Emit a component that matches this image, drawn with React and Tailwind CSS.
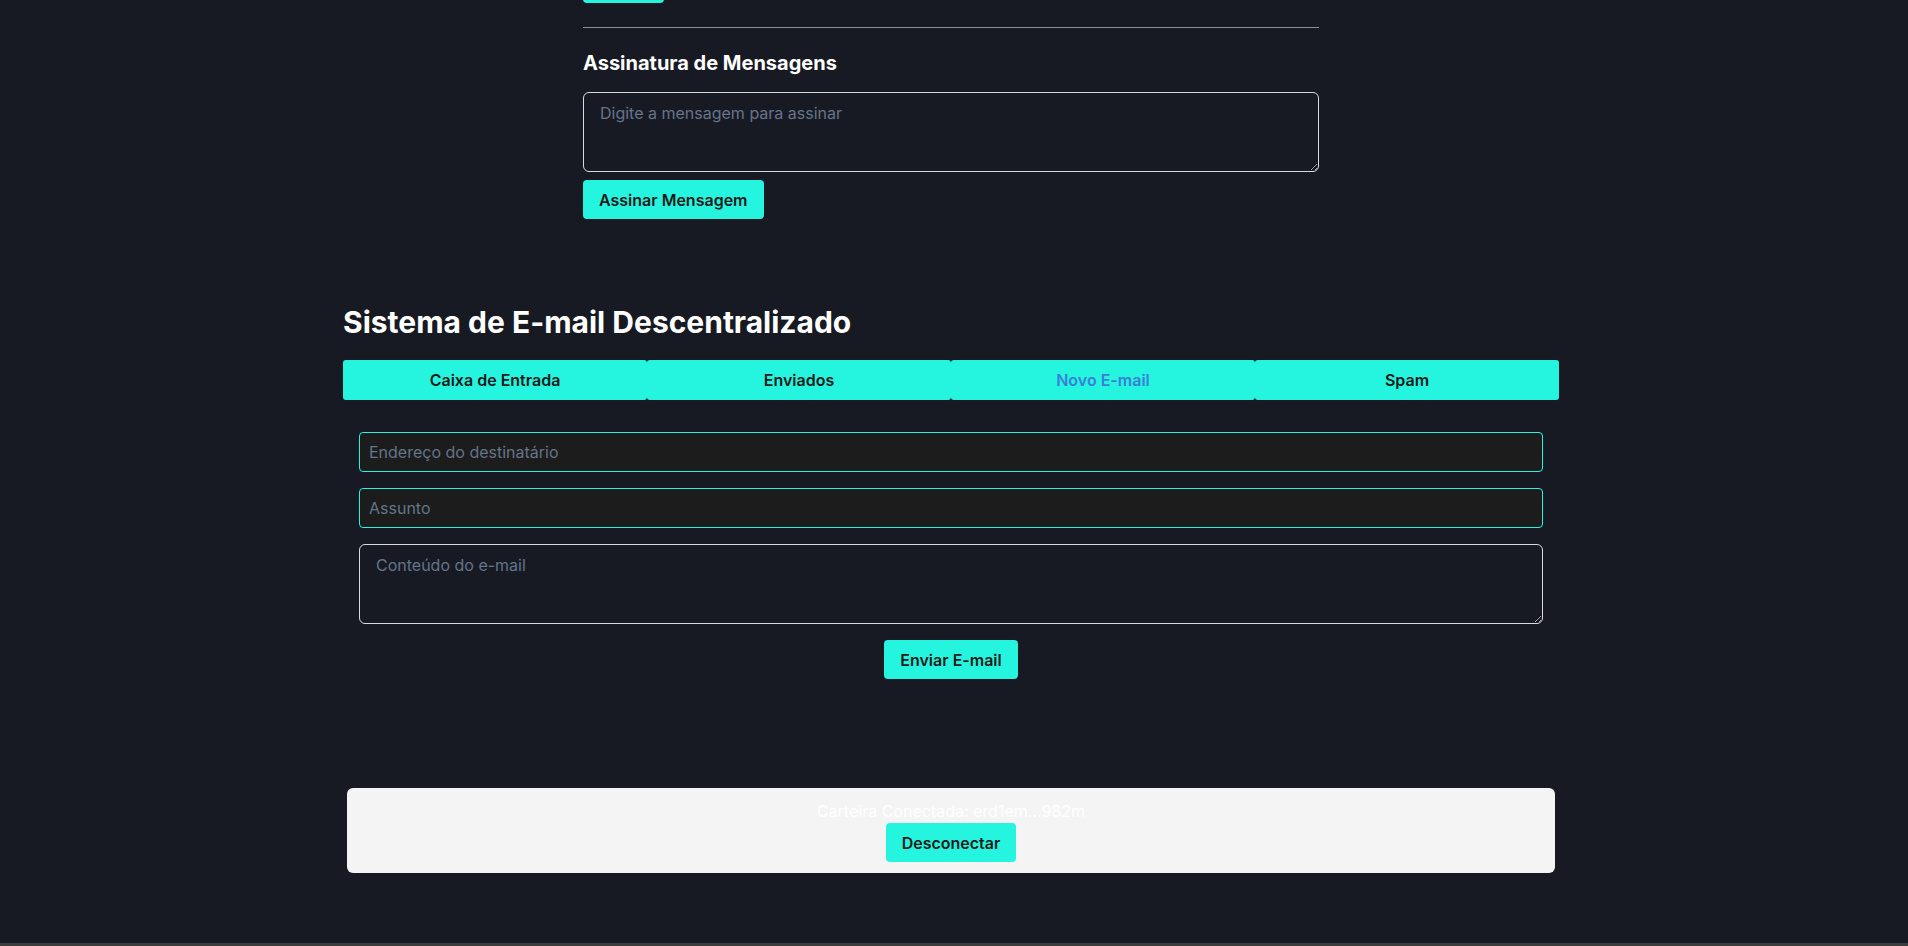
// App.jsx
import React, { useState } from 'react';

const tabs = ['Caixa de Entrada', 'Enviados', 'Novo E-mail', 'Spam'];

const App = () => {
  const [activeTab, setActiveTab] = useState('Novo E-mail');
  const [signMessage, setSignMessage] = useState('');
  const [recipient, setRecipient] = useState('');
  const [subject, setSubject] = useState('');
  const [content, setContent] = useState('');

  return (
    <div
      className="min-h-screen bg-[#181a23] pr-[6px] border-b-[3px] border-[#3c3c3c] overflow-hidden"
      style={{ fontFamily: 'Inter, "Noto Sans", sans-serif' }}
    >
      {/* Seccion de firma */}
      <div className="w-[736px] mx-auto -mt-[36px]">
        <button className="block h-[39px] w-[81px] rounded bg-[#25f5de]"></button>

        <hr className="mt-6 border-t border-[#8a8d94]" />

        <h2 className="mt-[21px] text-xl font-bold text-white leading-7">Assinatura de Mensagens</h2>

        <textarea
          className="mt-[15px] block w-full h-20 px-4 py-2 rounded-md border border-[#d9dadd] bg-transparent text-base text-white placeholder-[#64748b] outline-none"
          placeholder="Digite a mensagem para assinar"
          value={signMessage}
          onChange={(e) => setSignMessage(e.target.value)}
        />

        <button className="block mt-2 h-[39px] px-4 rounded bg-[#25f5de] text-[#1a1a1a] text-base font-semibold">
          Assinar Mensagem
        </button>
      </div>

      {/* Sistema de e-mail */}
      <div className="w-[1216px] mx-auto mt-[85px]">
        <h1 className="text-3xl leading-9 font-bold text-white">Sistema de E-mail Descentralizado</h1>

        <div className="mt-5 grid grid-cols-4">
          {tabs.map((tab) => (
            <button
              key={tab}
              onClick={() => setActiveTab(tab)}
              className={`h-10 rounded-[3px] bg-[#25f5de] text-base font-semibold ${
                activeTab === tab ? 'text-[#3a80d9]' : 'text-[#1a1a1a]'
              }`}
            >
              {tab}
            </button>
          ))}
        </div>

        <div className="px-4 pt-8 flex flex-col gap-4">
          <input
            type="text"
            className="h-10 px-[9px] rounded-[4px] border border-[#25f5de] bg-[#1c1c1c] text-base text-white placeholder-[#64748b] outline-none"
            placeholder="Endereço do destinatário"
            value={recipient}
            onChange={(e) => setRecipient(e.target.value)}
          />
          <input
            type="text"
            className="h-10 px-[9px] rounded-[4px] border border-[#25f5de] bg-[#1c1c1c] text-base text-white placeholder-[#64748b] outline-none"
            placeholder="Assunto"
            value={subject}
            onChange={(e) => setSubject(e.target.value)}
          />
          <textarea
            className="h-20 px-4 py-2 rounded-md border border-[#d9dadd] bg-transparent text-base text-white placeholder-[#64748b] outline-none"
            placeholder="Conteúdo do e-mail"
            value={content}
            onChange={(e) => setContent(e.target.value)}
          />
          <div className="flex justify-center">
            <button className="h-[39px] px-4 rounded bg-[#25f5de] text-[#1a1a1a] text-base font-semibold">
              Enviar E-mail
            </button>
          </div>
        </div>
      </div>

      {/* Carteira */}
      <div className="w-[1208px] mx-auto mt-[109px] py-[11px] rounded-md bg-[#f4f4f4] flex flex-col items-center">
        <p className="text-base leading-6 text-white">Carteira Conectada: erd1em...982m</p>
        <button className="h-[39px] px-4 rounded bg-[#25f5de] text-[#1a1a1a] text-base font-semibold">
          Desconectar
        </button>
      </div>
    </div>
  );
};

export default App;
